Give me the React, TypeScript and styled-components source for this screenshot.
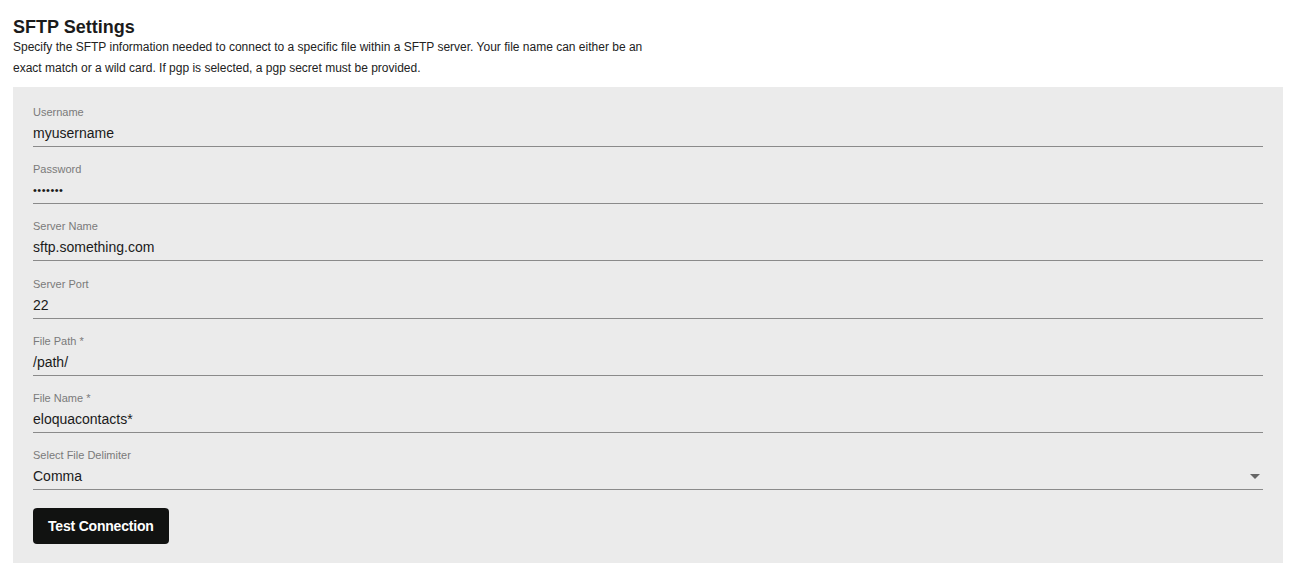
import React from 'react';
import styled, { createGlobalStyle } from 'styled-components';

const GlobalStyle = createGlobalStyle`
  html, body {
    margin: 0;
    padding: 0;
    background: #ffffff;
  }
  body {
    font-family: "Liberation Sans", Arial, Helvetica, sans-serif;
    color: #1a1a1a;
  }
`;

const Page = styled.div`
  padding: 17px 13px 16px 13px;
`;

const Title = styled.h2`
  margin: 0;
  font-size: 18px;
  line-height: 20px;
  font-weight: 700;
  color: #1b1b1b;
`;

const Description = styled.p`
  margin: 0 0 8px 0;
  max-width: 660px;
  font-size: 12px;
  line-height: 21px;
  color: #222;
`;

const Panel = styled.div`
  background: #ebebeb;
  padding: 18px 20px 19px 20px;
  display: flex;
  flex-direction: column;
  gap: 15.2px;
`;

const Field = styled.label`
  display: flex;
  flex-direction: column;
  border-bottom: 1px solid #8a8a8a;
  padding-bottom: 3px;
`;

const Label = styled.span`
  font-size: 11px;
  line-height: 14px;
  color: #7a7a7a;
  margin-bottom: 4px;
`;

const ValueRow = styled.div`
  display: flex;
  align-items: center;
  justify-content: space-between;
  height: 20px;
`;

const Value = styled.span<{ $masked?: boolean }>`
  font-size: ${(p) => (p.$masked ? '11px' : '14px')};
  letter-spacing: ${(p) => (p.$masked ? '0.5px' : 'normal')};
  line-height: 20px;
  color: #1a1a1a;
`;

const Caret = styled.svg`
  width: 10px;
  height: 5px;
  margin-right: 3px;
  fill: #666;
`;

const Actions = styled.div`
  padding-top: 3px;
`;

const Button = styled.button`
  height: 36px;
  padding: 0 15px;
  border: none;
  border-radius: 4px;
  background: #111211;
  color: #ffffff;
  font-family: "Liberation Sans", Arial, Helvetica, sans-serif;
  font-size: 14px;
  font-weight: 700;
  letter-spacing: -0.2px;
  cursor: pointer;
`;

type FieldDef = { label: string; value: string; masked?: boolean; select?: boolean };

const fields: FieldDef[] = [
  { label: 'Username', value: 'myusername' },
  { label: 'Password', value: '•••••••', masked: true },
  { label: 'Server Name', value: 'sftp.something.com' },
  { label: 'Server Port', value: '22' },
  { label: 'File Path *', value: '/path/' },
  { label: 'File Name *', value: 'eloquacontacts*' },
  { label: 'Select File Delimiter', value: 'Comma', select: true },
];

const App: React.FC = () => {
  return (
    <Page>
      <GlobalStyle />
      <Title>SFTP Settings</Title>
      <Description>
        Specify the SFTP information needed to connect to a specific file within a SFTP server. Your file name can
        either be an exact match or a wild card. If pgp is selected, a pgp secret must be provided.
      </Description>
      <Panel>
        {fields.map((f) => (
          <Field key={f.label}>
            <Label>{f.label}</Label>
            <ValueRow>
              <Value $masked={f.masked}>{f.value}</Value>
              {f.select && (
                <Caret viewBox="0 0 10 5">
                  <path d="M0 0 L10 0 L5 5 Z" />
                </Caret>
              )}
            </ValueRow>
          </Field>
        ))}
        <Actions>
          <Button>Test Connection</Button>
        </Actions>
      </Panel>
    </Page>
  );
};

export default App;
